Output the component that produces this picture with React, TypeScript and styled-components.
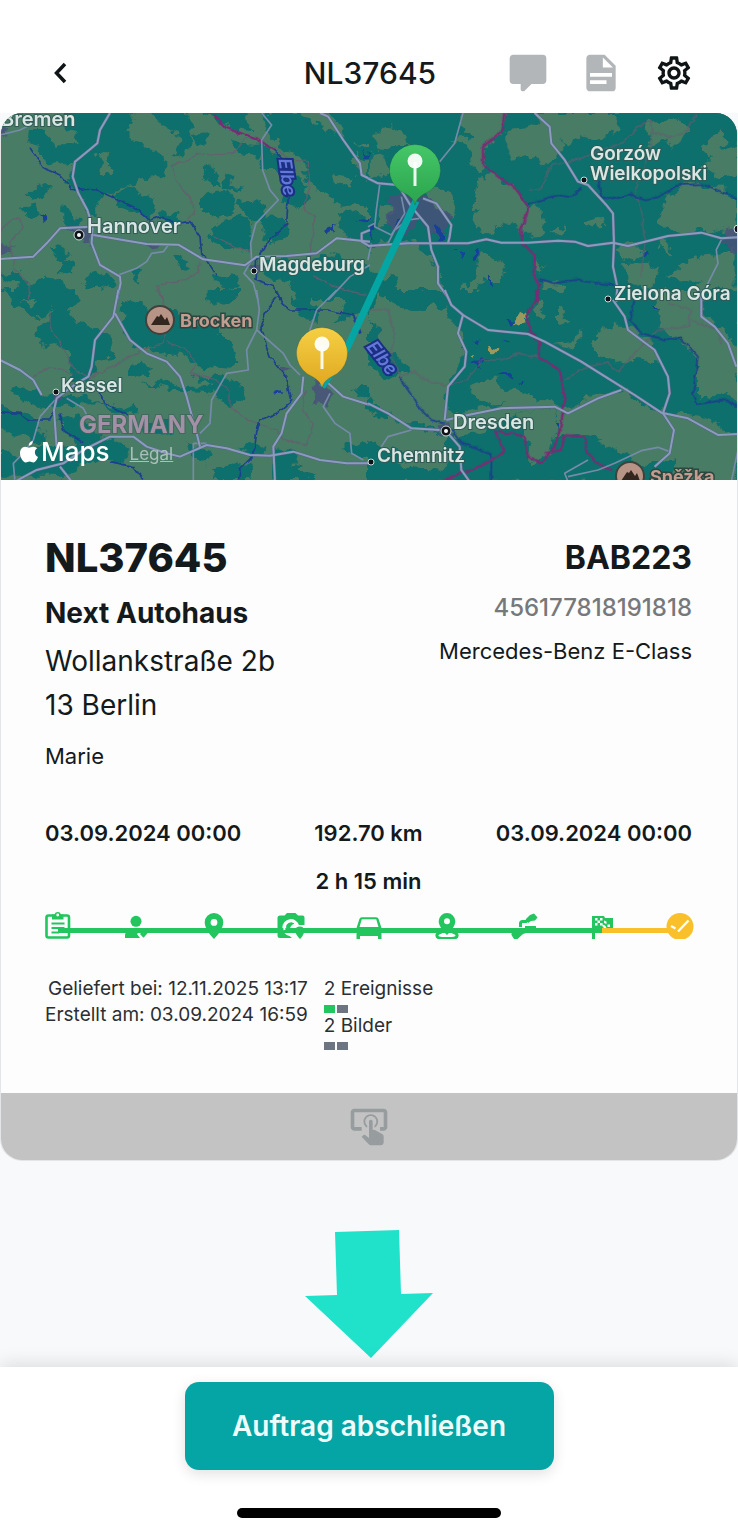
import React from "react";
import styled, { createGlobalStyle } from "styled-components";
import { MdOutlineSettings } from "react-icons/md";

const GlobalStyle = createGlobalStyle`
  *, *::before, *::after { box-sizing: border-box; }
  body {
    margin: 0;
    background: #f8f9fb;
    color: #14191c;
    font-family: Inter, "Liberation Sans", sans-serif;
  }
  h1, h2, h3, p, dl, dd, ul { margin: 0; padding: 0; font-weight: inherit; }
  ul { list-style: none; }
`;

const Page = styled.div`
  display: flex;
  flex-direction: column;
  min-height: 100vh;
`;

const Header = styled.header`
  display: grid;
  grid-template-columns: 1fr auto 1fr;
  align-items: center;
  height: 113px;
  padding: 32px 42px 0 44px;
  background: #fff;
`;

const HeaderTitle = styled.h1`
  font-size: 30px;
  font-weight: 500;
  line-height: 36px;
`;

const HeaderActions = styled.div`
  display: flex;
  justify-content: flex-end;
  gap: 29px;
`;

const IconButton = styled.button<{ $muted?: boolean }>`
  display: flex;
  align-items: center;
  justify-content: center;
  width: 44px;
  height: 44px;
  padding: 0;
  border: 0;
  background: none;
  color: ${(p) => (p.$muted ? "#b3b6b8" : "#0f1416")};
  cursor: pointer;
`;

const BackButton = styled(IconButton)`
  width: 32px;
`;

const Card = styled.main`
  overflow: hidden;
  border: 1px solid #e3e5e6;
  border-top: 0;
  border-radius: 22px;
  background: #fdfdfd;
`;

const MapFrame = styled.section`
  position: relative;
  height: 367px;
  background: #0b6f6c;
`;

const MapDrawing = styled.svg`
  display: block;
  width: 100%;
  height: 100%;
  font-family: Inter, "Liberation Sans", sans-serif;
`;

const MapCredit = styled.div`
  position: absolute;
  left: 18px;
  bottom: 12px;
  display: flex;
  align-items: center;
  gap: 2px;
  color: #fff;
  font-size: 26px;
  font-weight: 500;
  line-height: 32px;
`;

const LegalLink = styled.a`
  margin: 4px 0 0 18px;
  color: #a9c0bb;
  font-size: 17px;
  font-weight: 400;
  line-height: 20px;
`;

const Details = styled.section`
  padding: 54px 45px 43px 44px;
`;

const Columns = styled.div`
  display: flex;
  justify-content: space-between;
`;

const Column = styled.div<{ $end?: boolean }>`
  text-align: ${(p) => (p.$end ? "right" : "left")};
`;

const OrderNumber = styled.h2`
  font-size: 40px;
  font-weight: 800;
  line-height: 48px;
`;

const Plate = styled.h2`
  font-size: 32px;
  font-weight: 700;
  line-height: 48px;
`;

const Customer = styled.h3`
  margin-top: 9px;
  font-size: 28px;
  font-weight: 700;
  line-height: 44px;
`;

const Address = styled.p`
  margin-top: 4px;
  font-size: 28px;
  line-height: 44px;
`;

const Small = styled.p<{ $space: number }>`
  margin-top: ${(p) => p.$space}px;
  font-size: 22px;
  line-height: 28px;
`;

const Vin = styled.p`
  margin-top: 12px;
  color: #76797b;
  font-size: 24px;
  font-weight: 500;
  line-height: 28px;
`;

const Schedule = styled.div`
  display: flex;
  justify-content: space-between;
  margin-top: 49px;
  font-size: 22px;
  font-weight: 600;
  line-height: 28px;
`;

const Trip = styled.div`
  display: flex;
  flex-direction: column;
  gap: 20px;
  text-align: center;
`;

const Track = styled.ul`
  display: grid;
  grid-template-columns: repeat(8, 1fr) 32px;
  margin: 15px -4px 0 -3px;
`;

const Step = styled.li<{ $color: string; $next?: string }>`
  position: relative;
  height: 32px;
  color: ${(p) => p.$color};

  &::after {
    content: "";
    display: ${(p) => (p.$next ? "block" : "none")};
    position: absolute;
    top: 18px;
    left: 16px;
    right: -16px;
    height: 5px;
    background: ${(p) => p.$next};
  }

  svg {
    display: block;
    position: relative;
  }
`;

const Facts = styled.div`
  display: flex;
  gap: 16px;
  margin-top: 34px;
  color: #2b2f32;
  font-size: 19px;
  line-height: 26px;
`;

const Count = styled.div`
  height: 37px;
`;

const Marks = styled.div`
  display: flex;
  gap: 2px;
  margin-top: 3px;
`;

const Mark = styled.span<{ $done?: boolean }>`
  width: 11px;
  height: 8px;
  background: ${(p) => (p.$done ? "#22c55e" : "#6d7482")};
`;

const TapBar = styled.button`
  display: flex;
  align-items: center;
  justify-content: center;
  width: 100%;
  height: 67px;
  border: 0;
  background: #c3c3c3;
  color: #979c9f;
  cursor: pointer;
`;

const Hint = styled.div`
  display: flex;
  flex: 1;
  align-items: flex-end;
  justify-content: center;
  padding: 60px 0 8px;
`;

const Footer = styled.footer`
  display: flex;
  flex-direction: column;
  align-items: center;
  gap: 38px;
  padding: 15px 0;
  background: #fff;
  box-shadow: 0 -2px 18px rgba(0, 0, 0, 0.13);
`;

const FinishButton = styled.button`
  width: 50%;
  min-width: 340px;
  height: 88px;
  border: 0;
  border-radius: 14px;
  background: #04a5a4;
  box-shadow: 0 4px 14px rgba(0, 0, 0, 0.12);
  color: #eefdfc;
  font-family: inherit;
  font-size: 28px;
  font-weight: 600;
  cursor: pointer;
`;

const HomeIndicator = styled.div`
  width: 264px;
  height: 10px;
  border-radius: 5px;
  background: #000;
`;

/* ---- map data: four tiles, each drawn at three units per pixel ---- */

type Tile = {
  x: number;
  y: number;
  land?: string[];
  forest: string[];
  roads: string[];
  lanes: string[];
  rivers: string[];
  limits: string[];
  borders: string[];
  lakes: string[];
  urban: string[];
  clearing: string[];
};

const tiles: Tile[] = [
  {
    x: 0,
    y: -3,
    forest: [
      "M190 0H400L395 40 385 75 425 85 432 115 465 120 495 160 500 195 440 205 400 225 345 240 300 262 285 320 262 310 228 245 200 215 225 150 180 170 150 140 180 100 240 100 225 70 195 60Z",
      "M440 0H560L575 60 566 130 520 140 535 105 530 60 480 45Z",
      "M90 60L130 60 160 90 175 150 130 160 115 110 85 95Z",
      "M80 260L110 235 150 220 145 250 100 270Z",
      "M60 290L110 280 120 320 80 315Z",
      "M190 285L210 290 225 330 245 335 240 350 190 345Z",
      "M340 250L390 232 450 255 470 290 440 330 400 300 350 290Z",
      "M480 310L530 300 545 340 500 350Z",
      "M600 0H740L760 60 700 55 640 25Z",
      "M575 75L625 70 625 100 590 105Z",
      "M605 200L630 165 640 195 670 225 650 225 620 205Z M680 190L700 205 690 225 740 230 700 240 670 232Z",
      "M600 260L690 240 710 270 700 310 650 330 600 300Z",
      "M625 350L740 315 760 360 740 420 690 425 640 395Z",
      "M715 280L780 270 800 330 760 340Z",
      "M790 320L850 330 870 380 800 400Z",
      "M700 100L780 105 830 130 860 200 910 200 930 270 895 300 850 280 860 240 830 180 790 180 780 140 705 135Z",
      "M790 9H900L960 50 1110 120V160L1060 130 1080 190 1110 215V300L1060 280 1020 290 980 250 940 240 900 140 850 130 830 90 800 60Z",
      "M925 40L975 45 950 75 925 60Z M990 0H1110V100L1040 95 1015 50Z",
      "M1010 310L1060 300 1110 330V400L1040 385Z",
      "M780 450L850 445 930 470 960 430 1110 470V570H900L870 520 800 500Z",
      "M150 405L200 420 210 445 170 450Z M180 450L215 460 220 490 180 490Z M510 430L540 435 570 480 540 475Z",
      "M5 490L60 480 80 530 140 500 200 520 220 570H60L50 520 5 510Z M240 510L330 480 350 520 300 540 250 530Z",
      "M390 485L420 480 415 515 390 500Z M640 500L700 490 720 530 670 540Z",
    ],
    land: [
      "M290 130L310 125 335 160 330 190 300 180 310 155Z",
      "M380 60L440 50 500 60 535 90 520 125 460 125 440 100 400 95Z",
      "M1000 190L1060 200 1050 230 1000 220Z",
    ],
    roads: [
      "M330 9L300 60 292 100 225 155 218 200 235 250 262 300 278 350 275 400 300 465 360 500 362 520 350 575",
      "M0 447L100 440 140 400 180 355 270 350",
      "M280 375L440 402 535 404 610 448 735 466 770 440 860 438 950 430 1010 385 1110 395",
      "M960 9L985 20 1030 90 1080 160 1085 195 1110 207",
      "M1110 360L1085 370 1085 395 1115 412",
    ],
    lanes: [
      "M785 9L815 45 785 90 788 180 810 240 835 270 768 340 752 400 755 450 732 490 760 520 775 575",
      "M355 495L410 475 440 455 455 430 490 425 505 405",
      "M0 75L60 60 90 45",
      "M1110 465L1050 500 985 570",
    ],
    rivers: [
      "M90 110L130 175 180 195 215 235 290 240 400 290 450 330 480 320 530 340 570 335 600 380 605 430 625 460 650 500",
      "M820 120L850 150 865 260 860 340 810 390 770 450 765 510 820 530 840 570",
    ],
    limits: [
      "M515 165L570 150 590 130 640 135 700 130 740 85 770 85",
      "M515 165L530 215 575 270 580 310 560 335",
      "M820 110L870 150 925 155 930 230 910 300 945 320 930 430",
      "M600 455L595 490 540 515 470 525 490 570",
      "M0 360L55 320 70 350 30 400 45 480 85 520 90 570",
      "M640 380L700 410 755 430",
      "M940 500L1000 530 1100 555",
    ],
    borders: ["M640 15L680 55 770 85 820 120"],
    lakes: [
      "M115 325L140 315 145 330 125 342Z",
      "M970 360L1000 350 1010 330 1005 365 985 378Z",
      "M1065 325L1110 320 1100 335Z",
      "M1085 120L1110 150V165Z",
    ],
    urban: [
      "M190 355L270 350 275 400 255 400 240 370Z",
      "M0 400L40 410 30 430 5 425Z",
      "M445 410L480 405 465 425Z",
      "M0 55H30L20 72H0Z",
      "M755 455L780 460 765 500Z",
    ],
    clearing: [],
  },
  {
    x: 368,
    y: -3,
    forest: ["M0 0H1115V575H0Z"],
    land: [
      "M25 60L45 40 100 60 130 105 90 105 60 120 25 110Z",
      "M5 130L40 125 70 190 30 200 5 190Z",
      "M290 0H410L400 70 340 125 360 170 335 185 310 160 320 110 250 90 310 80 280 50Z",
      "M330 200L380 195 430 230 480 290 520 300 535 370 460 380 440 330 420 350 380 340 370 370 310 360 330 300 310 250 335 230Z",
      "M415 60L480 55 520 30 560 40 590 100 570 150 520 160 470 130 440 160 415 120Z",
      "M500 9H750L745 60 700 90 640 80 600 110 570 60 530 60Z",
      "M830 40L930 20 960 60 910 110 880 90 850 110Z",
      "M1000 110L1060 60 1080 80 1060 120 1110 110V190L1060 200 1000 170 1030 140Z",
      "M900 260L960 225 1060 230 1105 270V380L1000 360 960 370 900 360 870 330 890 290Z",
      "M650 325L700 320 710 345 660 350Z M550 370L590 335 580 370Z",
      "M335 430L370 435 410 470 400 510 350 510 310 570H250L320 500Z",
      "M0 420L30 400 130 400 190 430 210 490 240 570H60L90 510 40 500 0 470Z",
      "M500 450L530 470 510 490Z M520 510L590 525 580 560 520 570Z",
      "M740 410L810 400 830 430 790 450 750 440Z M870 390L900 385 910 440 880 420Z",
      "M900 500L960 450 1040 430 1100 410V570H940L990 520Z",
      "M760 460L830 455 870 480 850 540 790 520Z",
      "M630 0H660V30H630Z M150 230L230 240 270 300 240 320 200 280Z",
      "M40 280L70 300 60 340 30 350Z",
    ],
    roads: [
      "M0 205L30 220 90 225 130 290 180 350 190 420 210 470 210 520 245 570",
      "M0 408L120 400 300 400 355 388 400 398 480 398 570 392 620 395 660 408 735 398 780 408 900 378 1000 368 1060 385 1110 382",
      "M500 9L545 50 550 100 590 150 630 215 660 225 715 285 735 310 738 400 735 470 748 530 745 575",
      "M165 265L205 280 250 345 245 380 240 400",
    ],
    lanes: [
      "M285 9L260 100 215 155",
      "M35 225L25 300 20 350 70 375 110 310 100 260",
      "M1060 390L1045 420 1050 460 1000 560",
      "M0 350L20 340 M0 450L10 400",
      "M60 400L80 360 120 330 155 325",
    ],
    rivers: [
      "M480 280L570 255 610 262 640 235",
      "M690 210L700 260 730 268 790 255 830 268 870 262 930 225 1000 222 1060 245 1110 265",
      "M515 508L560 520 620 510 680 518 740 525",
    ],
    limits: [
      "M480 240L520 235 550 165 590 160 680 130 760 100 800 60 850 30 855 70 910 80 960 60 985 10",
      "M850 70L850 110 835 140 830 180 800 250 820 300 830 400 820 500",
    ],
    borders: [
      "M412 9L405 60 345 110 345 165 400 205 450 245 480 290 475 320 458 360 465 400 500 435 500 470 495 490 515 520 505 575",
    ],
    lakes: [
      "M200 345L225 350 225 390 205 385Z",
      "M255 425L270 425 265 430Z M275 435L288 432 285 455Z M315 420L328 420 325 445 315 440Z",
      "M360 495L370 495 366 535 360 525Z",
      "M10 340L25 350 15 385Z",
      "M80 320L90 325 78 350Z",
      "M825 430L838 430 835 442 827 442Z",
    ],
    urban: [
      "M60 260L100 250 190 260 240 310 240 370 190 370 150 330 110 380 60 350Z",
      "M1060 360L1110 350V420H1085Z",
    ],
    clearing: [],
  },
  {
    x: 0,
    y: 177,
    forest: [
      "M0 0H80L60 30 100 50 130 10 230 0 240 40 200 60 230 100 330 130 340 200 290 220 270 270 215 275 210 200 170 160 120 170 100 140 160 60 100 90Z",
      "M370 30L430 40 450 60 530 60 560 110 640 110 700 170 715 210 680 235 600 230 560 200 500 200 440 175 400 170 365 110Z",
      "M620 0H720V25L660 45 620 30Z",
      "M390 225L430 215 460 240 430 255 390 250Z M425 280L500 270 560 290 640 290 630 310 560 305 500 295Z",
      "M570 250L610 265 680 260 730 290 740 320 690 350 660 330 650 300 600 270Z",
      "M30 300L80 290 140 320 200 310 260 320 330 350 400 345 420 370 340 370 290 340 220 350 110 350 60 330Z",
      "M0 350L70 370 110 400 150 460 100 460 60 430 0 430Z",
      "M170 380L240 370 250 400 310 440 280 460 230 460 200 430Z",
      "M0 470L70 500 130 460 200 470 330 440 390 470 370 520 250 520 200 560H0Z",
      "M430 400L510 395 525 425 480 435 430 420Z M720 480L760 455 800 470 780 500Z",
      "M560 460L640 480 620 520 580 510Z M640 540L700 520 760 530 750 570H640Z",
      "M820 475L890 480 880 530 950 550 940 570H820Z",
      "M870 20L920 25 960 60 950 90 900 80Z M1000 100L1110 60V0H1060L1040 50Z",
      "M1060 300L1110 290V330L1080 325Z M1030 470L1110 460V500L1050 495Z",
    ],
    roads: [
      "M355 0L340 80 285 150 275 230 265 260 230 280 170 325 162 360 170 470",
      "M345 70L390 150 440 190 500 215 540 260 560 320 590 430 600 470",
      "M45 575L110 540 190 520 250 480 330 440 400 440 440 470 500 490 540 500 620 465 680 475 750 495 810 497 880 485 960 510 1040 520 1110 520",
      "M910 260L905 310 860 370 845 430 820 470 825 575",
      "M985 280L1030 320 1110 345",
      "M180 530L215 575",
      "M0 210L60 240 100 270 125 315",
    ],
    lanes: [
      "M770 0L778 60 770 120 740 180 745 240 680 250 635 330 630 400 600 430",
      "M770 120L850 190 870 225 900 255",
      "M1010 0L950 60 930 120 920 180",
      "M120 380L100 450 60 500 40 520 45 575",
      "M200 325L250 355 260 375",
      "M990 310L970 350 1005 400 1050 430 1055 490 1090 510",
      "M580 460L580 575 M580 460H620",
      "M165 330L120 380",
    ],
    rivers: [
      "M830 0L845 40 870 60 980 60 1060 75 1080 130",
      "M830 20L800 60 780 110 810 200 860 260 875 330 830 370 780 390 770 430 760 500 720 540 715 575",
      "M0 365L60 370 90 390 150 390 165 360",
      "M180 370L190 420 250 455",
      "M300 300L310 340 400 380",
      "M330 515L400 530 430 570",
    ],
    limits: [
      "M150 60L150 110 200 190 215 230 270 265 420 185 490 160 495 110",
      "M470 0L490 30 485 80",
      "M500 155L560 180 590 220 570 250 650 270 690 300 690 350 740 390 830 420 850 450 920 465 940 400 910 360 915 300",
      "M100 260L150 230 215 250",
    ],
    borders: [],
    lakes: ["M810 305L830 297 845 310 825 315Z"],
    urban: [
      "M940 270L990 290 985 350 945 340Z",
      "M840 230L870 235 850 255Z",
      "M155 315L190 320 165 350Z",
    ],
    clearing: [],
  },
  {
    x: 368,
    y: 177,
    forest: ["M0 0H1115V575H0Z"],
    land: [
      "M30 0L90 50 150 60 200 40 240 60 260 100 290 150 280 230 240 270 235 330 260 370 340 355 420 340 360 340 300 300 360 270 380 250 400 290 470 310 560 340 600 360 650 330 760 300 850 360 1000 380 1110 430V575H900L920 510 830 530 740 480 690 450 640 430 560 440 580 400 560 350 440 370 330 430 240 440 160 400 100 400 0 320V230L60 270 130 240 90 200 40 170 30 110 0 90Z",
      "M510 30L530 40 520 95 500 70Z M570 50L610 90 570 105Z M560 165L620 150 640 110 640 150 600 175Z",
      "M670 145L720 110 780 110 850 160 880 215 800 210 740 215 690 200Z",
      "M860 0H1000L1000 60 1080 130 1110 180V330L1050 310 990 330 990 220 940 150 880 120Z",
      "M0 360L100 400 240 440 230 480 120 490 40 470 0 450Z",
      "M90 520L200 480 250 500 230 540 120 530Z",
      "M440 370L560 350 575 400 540 490 500 520 470 440Z",
    ],
    roads: [
      "M230 0L250 45 285 75 270 130 295 185 290 230 240 290 230 390",
      "M235 390L300 375 400 355 560 350 600 370 690 325 760 300",
      "M285 75L360 120 480 132 530 155 640 215 720 265 800 315 880 368 960 385 1050 435 1115 432",
      "M735 30L770 80 780 120 860 180 900 260 905 310 885 370 918 420 905 490 860 530",
      "M0 340L60 370 130 415 215 420",
      "M240 430L275 470 280 540 305 575",
      "M1000 0L1000 80 1040 110 1080 160 1105 230",
    ],
    lanes: [
      "M130 420L60 440 40 470",
      "M1110 480L1090 575",
      "M905 485L870 472 820 482 740 520 690 540 600 560 M660 510L590 550 600 575",
    ],
    rivers: [
      "M95 260L130 310 150 350 190 390 230 400",
      "M250 420L280 460 330 475 370 495 370 575",
      "M800 30L785 90 820 130 900 150 940 145 990 200 975 310 990 342 1070 330 1110 350",
    ],
    limits: [
      "M0 60L60 60 80 130 70 200 95 260 140 245 170 270 230 285 300 270 340 210 400 210 450 190 510 200",
      "M590 270L650 235 720 215 750 245 820 170 870 120 960 110 970 60 900 40",
      "M970 90L1050 120 1060 160",
    ],
    borders: [
      "M505 0L505 30 475 80 490 130 515 160 510 200 575 240 590 320 580 400 560 470 520 520 480 500 470 440 430 430 380 425 410 480 390 500 330 530 230 570",
      "M530 490L580 480 590 435 650 440 660 490 700 530 735 540",
    ],
    lakes: [
      "M410 95L440 90 430 110Z M300 215L330 215 340 200 365 215 330 230Z M320 155L335 155 328 165Z M410 155L425 155 418 165Z",
      "M380 245L400 250 430 250 440 265 410 260Z M455 275L468 272 462 285Z M862 45L875 45 872 58Z",
      "M565 400L578 395 572 415Z",
    ],
    urban: ["M200 405L250 400 255 440 205 430Z"],
    clearing: [
      "M440 80L465 65 470 90 455 110 435 105Z",
      "M360 170L395 175 390 190 365 190Z M303 190L322 190 315 205Z",
    ],
  },
];

type Town = { name: string; x: number; y: number; dot?: [number, number]; big?: boolean };

const towns: Town[] = [
  { name: "Bremen", x: 1, y: 13, big: true },
  { name: "Hannover", x: 87, y: 120, dot: [79, 122], big: true },
  { name: "Magdeburg", x: 259, y: 158, dot: [254, 158] },
  { name: "Gorzów", x: 590, y: 47 },
  { name: "Wielkopolski", x: 590, y: 67, dot: [584, 67] },
  { name: "Zielona Góra", x: 614, y: 187, dot: [608, 186] },
  { name: "Kassel", x: 61, y: 279, dot: [56, 279] },
  { name: "Dresden", x: 453, y: 316, dot: [446, 318], big: true },
  { name: "Chemnitz", x: 377, y: 349, dot: [371, 349] },
];

const Peak = ({ x, y, name }: { x: number; y: number; name: string }) => (
  <g>
    <circle cx={x} cy={y} r="14" fill="#b89486" stroke="#41423d" strokeWidth="2" />
    <path d={`M${x - 9} ${y + 5}l6-9 2 1 2-3 4 6 2-3 3 8z`} fill="#33261f" />
    <text
      x={x + 20}
      y={y + 7}
      fontSize="18"
      fontWeight="700"
      fill="#c59d90"
      stroke="#2c4740"
      strokeWidth="3"
      paintOrder="stroke"
    >
      {name}
    </text>
  </g>
);

const Pin = ({ x, y, fill }: { x: number; y: number; fill: string }) => (
  <g transform={`translate(${x} ${y})`}>
    <path
      d="M0 35C-1 30-5 26-10 23.500A25.500 25.500 0 1 1 10 23.500C5 26 1 30 0 35Z"
      fill={fill}
      stroke="#1c4a36"
      strokeOpacity="0.25"
    />
    <path d="M0-8V16" stroke="#fff" strokeOpacity="0.9" strokeWidth="3" />
    <circle cy="-9" r="7.500" fill="#fff" fillOpacity="0.93" />
  </g>
);

const RouteMap = () => (
  <MapDrawing viewBox="0 0 738 367" preserveAspectRatio="xMidYMid slice" role="img" aria-label="Route">
    <defs>
      <filter id="coast" x="0" y="0" width="100%" height="100%">
        <feTurbulence type="fractalNoise" baseFrequency="0.09" numOctaves="3" seed="7" />
        <feDisplacementMap in="SourceGraphic" scale="14" xChannelSelector="R" yChannelSelector="G" />
      </filter>
      <filter id="wiggle" x="0" y="0" width="100%" height="100%">
        <feTurbulence type="fractalNoise" baseFrequency="0.12" numOctaves="2" seed="3" />
        <feDisplacementMap in="SourceGraphic" scale="5" xChannelSelector="R" yChannelSelector="G" />
      </filter>
      <linearGradient id="green" x2="0" y2="1">
        <stop stopColor="#45c768" />
        <stop offset="1" stopColor="#2aa34d" />
      </linearGradient>
      <linearGradient id="yellow" x2="0" y2="1">
        <stop stopColor="#f5cf45" />
        <stop offset="1" stopColor="#dfa71f" />
      </linearGradient>
      <clipPath id="quarter">
        <path d="M-3 0H1116V585H-3Z" />
      </clipPath>
    </defs>
    <rect x="-20" y="-20" width="778" height="407" fill="#487b65" />
    <g filter="url(#coast)">
      <rect x="-20" y="-20" width="778" height="407" fill="#487b65" />
      {tiles.map((t, i) => (
        <g key={i} transform={`translate(${t.x} ${t.y}) scale(0.3333)`} clipPath="url(#quarter)">
          {t.forest.map((d) => <path key={d} d={d} fill="#0b6f6c" />)}
          {t.land?.map((d) => <path key={d} d={d} fill="#487b65" />)}
          {t.urban.map((d) => <path key={d} d={d} fill="#4b517a" fillOpacity="0.8" />)}
          {t.clearing.map((d) => <path key={d} d={d} fill="#9a9a5e" />)}
          {t.lakes.map((d) => <path key={d} d={d} fill="#173f9a" />)}
        </g>
      ))}
    </g>
    <g filter="url(#wiggle)" fill="none" strokeLinejoin="round">
      {tiles.map((t, i) => (
        <g key={i} transform={`translate(${t.x} ${t.y}) scale(0.3333)`}>
          {t.limits.map((d) => <path key={d} d={d} stroke="#675c70" strokeOpacity="0.8" strokeWidth="4" />)}
          {t.rivers.map((d) => <path key={d} d={d} stroke="#1c3f8d" strokeWidth="5" />)}
          {t.borders.map((d) => <path key={d} d={d} stroke="#7b2c74" strokeWidth="7" />)}
        </g>
      ))}
    </g>
    <g fill="none" strokeLinejoin="round">
      {tiles.map((t, i) => (
        <g key={i} transform={`translate(${t.x} ${t.y}) scale(0.3333)`}>
          {t.lanes.map((d) => <path key={d} d={d} stroke="#768ba9" strokeWidth="5" />)}
          {t.roads.map((d) => <path key={d} d={d} stroke="#566685" strokeWidth="9" />)}
          {t.roads.map((d) => <path key={d + "c"} d={d} stroke="#8b9bbd" strokeWidth="6" />)}
        </g>
      ))}
    </g>
    <path d="M416 88L348 233 322 274" fill="none" stroke="#05a5a3" strokeWidth="7" />
    {[
      { x: 287, y: 64, r: 82 },
      { x: 382, y: 245, r: 52 },
    ].map((e) => (
      <text
        key={e.x}
        transform={`translate(${e.x} ${e.y}) rotate(${e.r})`}
        y="6"
        textAnchor="middle"
        fontSize="18"
        fontWeight="600"
        fontStyle="italic"
        fill="#6478d8"
        stroke="#1b2f85"
        strokeWidth="4"
        paintOrder="stroke"
      >
        Elbe
      </text>
    ))}
    <text x="79" y="320" fontSize="24" fontWeight="700" fill="#a390a6" stroke="#3f6a5c" strokeWidth="2" paintOrder="stroke">
      GERMANY
    </text>
    <Peak x={160} y={207} name="Brocken" />
    <Peak x={630} y={363} name="Sněžka" />
    {towns.map((t) => (
      <g key={t.name}>
        {t.dot && (
          <g>
            <circle cx={t.dot[0]} cy={t.dot[1]} r={t.big ? 5 : 3} fill="#0c1216" stroke="#cdd9d8" />
            {t.big && <circle cx={t.dot[0]} cy={t.dot[1]} r="2" fill="#fff" />}
          </g>
        )}
        <text
          x={t.x}
          y={t.y}
          fontSize={t.big ? 20 : 19}
          fontWeight="600"
          fill="#d9e6e4"
          stroke="#2f5a55"
          strokeWidth="2"
          paintOrder="stroke"
        >
          {t.name}
        </text>
      </g>
    ))}
    <circle cx="738" cy="116" r="4" fill="#0c1216" stroke="#dfe8e6" />
    <Pin x={415} y={57} fill="url(#green)" />
    <Pin x={322} y={240} fill="url(#yellow)" />
  </MapDrawing>
);

const AppleMark = () => (
  <svg width="20" height="24" viewBox="0 0 20 24" fill="#fff" aria-hidden="true">
    <path d="M13.800 1C14 3.200 12.300 5.600 9.900 5.700 9.600 3.500 11.700 1.200 13.800 1ZM18.300 8.300C16.600 9.300 15.800 10.700 15.900 12.500 16 14.700 17.200 16.100 19 16.900 18.200 19.100 16.400 22.300 14.300 22.400 12.900 22.400 12.300 21.600 10.600 21.600 8.900 21.600 8.200 22.400 6.900 22.400 4 22.500 1 17.300 1 13 1 9.200 3.400 6.800 6.100 6.700 7.700 6.700 9 7.700 10 7.700 11 7.700 12.600 6.600 14.400 6.700 16 6.800 17.400 7.300 18.300 8.300Z" />
  </svg>
);

const Glyph = ({ d, size = 44 }: { d: string; size?: number }) => (
  <svg width={size} height={size} viewBox="0 0 24 24" fill="currentColor" aria-hidden="true">
    <path d={d} />
  </svg>
);

const commentPath =
  "M9 22A1 1 0 0 1 8 21V18H4A2 2 0 0 1 2 16V4C2 2.890 2.900 2 4 2H20A2 2 0 0 1 22 4V16A2 2 0 0 1 20 18H13.900L10.200 21.710C10 21.900 9.750 22 9.500 22H9Z";
const documentPath =
  "M13 9H18.500L13 3.500V9M6 2H14L20 8V20A2 2 0 0 1 18 22H6C4.890 22 4 21.100 4 20V4C4 2.890 4.890 2 6 2M15 18V16H6V18H15M18 14V12H6V14H18Z";
const tapPath =
  "M13 5C15.210 5 17 6.790 17 9C17 10.500 16.200 11.770 15 12.460V11.240C15.610 10.690 16 9.890 16 9C16 7.340 14.660 6 13 6S10 7.340 10 9C10 9.890 10.390 10.690 11 11.240V12.460C9.800 11.770 9 10.500 9 9C9 6.790 10.790 5 13 5M20 20.500C19.970 21.320 19.320 21.970 18.500 22H13C12.620 22 12.260 21.850 12 21.570L8 17.370L8.740 16.600C8.930 16.390 9.200 16.280 9.500 16.280H9.700L12 18V9C12 8.450 12.450 8 13 8S14 8.450 14 9V13.470L15.210 13.600L19.150 15.790C19.680 16.030 20 16.560 20 17.140V20.500M20 2H4C2.900 2 2 2.900 2 4V12C2 13.110 2.900 14 4 14H8V12H4V4H20V12H18V14H20C21.100 14 22 13.110 22 12V4C22 2.900 21.110 2 20 2Z";

const green = "#22c55e";
const amber = "#fac02b";

const steps: { label: string; color: string; next?: string; art: React.ReactNode }[] = [
  {
    label: "Auftrag",
    color: green,
    next: green,
    art: (
      <>
        <rect x="4.500" y="5.500" width="22.500" height="22" rx="2" fill="none" stroke="currentColor" strokeWidth="2.600" />
        <path d="M10 9.500V4.500H12.500A3.400 3.400 0 0 1 19 4.500H21.500V9.500Z" fill="currentColor" />
        <circle cx="15.700" cy="5" r="1.400" fill="#fdfdfd" />
        <path d="M9.500 13.500H22.500M9.500 18H22.500M9.500 22.500H17" stroke="currentColor" strokeWidth="2" />
      </>
    ),
  },
  {
    label: "Fahrer",
    color: green,
    next: green,
    art: (
      <>
        <circle cx="16" cy="11.300" r="5.500" fill="currentColor" />
        <path d="M5 28V25C5 22 10 19 16 19H22L17 24 20 28Z" fill="currentColor" />
        <path d="M21 23L23.500 25.500 27 21.500" fill="none" stroke="currentColor" strokeWidth="3" />
      </>
    ),
  },
  {
    label: "Abholort",
    color: green,
    next: green,
    art: (
      <path
        d="M16 3A9.300 9.300 0 0 0 6.700 12.300C6.700 18 12 25 16 29 20 25 25.300 18 25.300 12.300A9.300 9.300 0 0 0 16 3ZM16 15.800A3.400 3.400 0 1 1 16 9 3.400 3.400 0 0 1 16 15.800Z"
        fill="currentColor"
      />
    ),
  },
  {
    label: "Bilder",
    color: green,
    next: green,
    art: (
      <>
        <path d="M5 5.500H9.500L12 3H20.500L23 5.500H27.500A2 2 0 0 1 29.500 7.500V15H24A8.500 8.500 0 1 0 14.500 26L17 28H5A2.500 2.500 0 0 1 2.500 25.500V8A2.500 2.500 0 0 1 5 5.500Z" fill="currentColor" />
        <path d="M11.500 19A5 5 0 0 1 19.500 13.500C16.500 14.500 15 17 14.500 20Z" fill="currentColor" />
        <path d="M9.500 20A6.500 6.500 0 0 1 22.500 16" fill="none" stroke="#fdfdfd" strokeWidth="2" />
        <path d="M20 20A5 5 0 0 1 29.500 20C29.500 23.500 27 27 25 29 23 27 20 23.500 20 20Z" fill="currentColor" />
      </>
    ),
  },
  {
    label: "Fahrt",
    color: green,
    next: green,
    art: (
      <path
        d="M3.500 18L6.500 8.800A2.500 2.500 0 0 1 8.800 7.200H23.200A2.500 2.500 0 0 1 25.500 8.800L28.500 18V29H25V26H7V29H3.500ZM6.500 17H25.500L23.200 9.300H8.800Z"
        fill="currentColor"
        fillRule="evenodd"
      />
    ),
  },
  {
    label: "Zielort",
    color: green,
    next: green,
    art: (
      <>
        <path
          d="M16 3A8.300 8.300 0 0 0 7.700 11.300C7.700 16 12 21 16 25 20 21 24.300 16 24.300 11.300A8.300 8.300 0 0 0 16 3ZM16 14.300A3 3 0 1 1 16 8.300 3 3 0 0 1 16 14.300Z"
          fill="currentColor"
        />
        <path d="M10.500 22C4 23.500 4.500 28 11 28.500H21C27.500 28 28 23.500 21.500 22" fill="none" stroke="currentColor" strokeWidth="3" />
      </>
    ),
  },
  {
    label: "Übergabe",
    color: green,
    next: green,
    art: (
      <>
        <path d="M11.500 17V13.500Q11.500 11.500 13.500 11.500H17L20 9" fill="none" stroke="currentColor" strokeWidth="3" />
        <path d="M17 9L21 5 25 3.500 28.500 7.500 26 10.500 22 11 19 13Z" fill="currentColor" />
        <path d="M16 16H27V20L14 24 8.500 29H5L2.500 25V22L8 18H16Z" fill="currentColor" />
      </>
    ),
  },
  {
    label: "Ziel",
    color: green,
    next: amber,
    art: (
      <>
        <path d="M6 6H18L19 8H27V23H16L15 21H9V29H6Z" fill="currentColor" />
        <path
          d="M9 8h2.500v2.500H9zM14 8h2.500v2.500H14zM11.500 10.500H14V13h-2.500zM9 13h2.500v2.500H9zM14 13h2.500v2.500H14zM18 10.500l2.500 1v2.500L18 13zM16.500 14.500l2.500 1 1.500 2-2 1-2-2zM21.500 14.500H24V17h-2.500z"
          fill="#fdfdfd"
        />
      </>
    ),
  },
  {
    label: "Abschluss",
    color: amber,
    art: (
      <>
        <circle cx="16" cy="16.500" r="13.500" fill="currentColor" />
        <path d="M7 16L11.500 18.500M14 21.500L24.500 10.500" fill="none" stroke="#fdfdfd" strokeWidth="2.400" />
      </>
    ),
  },
];

export default function App() {
  return (
    <>
      <GlobalStyle />
      <Page>
        <Header>
          <BackButton type="button" aria-label="Zurück">
            <svg width="16" height="24" viewBox="0 0 16 24" fill="none" aria-hidden="true">
              <path d="M13 3L4.500 12 13 21" stroke="currentColor" strokeWidth="3.500" />
            </svg>
          </BackButton>
          <HeaderTitle>NL37645</HeaderTitle>
          <HeaderActions>
            <IconButton type="button" $muted aria-label="Nachrichten">
              <Glyph d={commentPath} />
            </IconButton>
            <IconButton type="button" $muted aria-label="Dokumente">
              <Glyph d={documentPath} />
            </IconButton>
            <IconButton type="button" aria-label="Einstellungen">
              <MdOutlineSettings size={40} />
            </IconButton>
          </HeaderActions>
        </Header>

        <Card>
          <MapFrame>
            <RouteMap />
            <MapCredit>
              <AppleMark />
              Maps
              <LegalLink href="#legal">Legal</LegalLink>
            </MapCredit>
          </MapFrame>

          <Details>
            <Columns>
              <Column>
                <OrderNumber>NL37645</OrderNumber>
                <Customer>Next Autohaus</Customer>
                <Address>
                  Wollankstraße 2b
                  <br />
                  13 Berlin
                </Address>
                <Small $space={15}>Marie</Small>
              </Column>
              <Column $end>
                <Plate>BAB223</Plate>
                <Vin>456177818191818</Vin>
                <Small $space={15}>Mercedes-Benz E-Class</Small>
              </Column>
            </Columns>

            <Schedule>
              <span>03.09.2024 00:00</span>
              <Trip>
                <span>192.70 km</span>
                <span>2 h 15 min</span>
              </Trip>
              <span>03.09.2024 00:00</span>
            </Schedule>

            <Track>
              {steps.map((s) => (
                <Step key={s.label} $color={s.color} $next={s.next}>
                  <svg width="32" height="29" viewBox="0 0 32 29" role="img" aria-label={s.label}>
                    {s.art}
                  </svg>
                </Step>
              ))}
            </Track>

            <Facts>
              <Column $end>
                <p>Geliefert bei: 12.11.2025 13:17</p>
                <p>Erstellt am: 03.09.2024 16:59</p>
              </Column>
              <Column>
                <Count>
                  <p>2 Ereignisse</p>
                  <Marks>
                    <Mark $done />
                    <Mark />
                  </Marks>
                </Count>
                <Count>
                  <p>2 Bilder</p>
                  <Marks>
                    <Mark />
                    <Mark />
                  </Marks>
                </Count>
              </Column>
            </Facts>
          </Details>

          <TapBar type="button" aria-label="Details öffnen">
            <Glyph d={tapPath} />
          </TapBar>
        </Card>

        <Hint>
          <svg width="128" height="129" viewBox="0 0 128 129" aria-hidden="true">
            <path d="M30 2L94 0 96 64 128 63 66 128 0 66 32 65Z" fill="#20e2ca" />
          </svg>
        </Hint>

        <Footer>
          <FinishButton type="button">Auftrag abschließen</FinishButton>
          <HomeIndicator />
        </Footer>
      </Page>
    </>
  );
}
